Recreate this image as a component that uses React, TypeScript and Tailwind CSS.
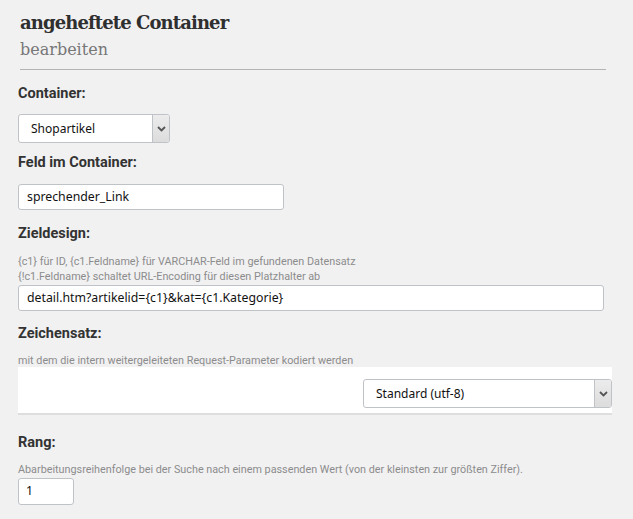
import React from "react";

const label = "text-[14.5px] font-bold text-[#333] font-['Roboto',sans-serif] leading-[15px]";
const help = "text-[10.8px] text-[#8c8c8c] font-['Roboto',sans-serif]";
const field = "bg-white border border-[#bfc3c8] rounded-[3px] font-['Noto_Sans',sans-serif] text-[#111]";

function Chevron() {
  return (
    <svg width="9" height="6" viewBox="0 0 9 6" fill="none">
      <path d="M1 1l3.5 3.5L8 1" stroke="#555" strokeWidth="1.8" />
    </svg>
  );
}

function SelectBox({ value, className }: { value: string; className: string }) {
  return (
    <div className={`${field} text-[12px] flex items-stretch overflow-hidden ${className}`}>
      <div className="flex-1 flex items-center pl-[12px]">{value}</div>
      <div className="w-[17px] flex items-center justify-center bg-gradient-to-b from-[#ececec] to-[#dcdcdc] border-l border-[#bfc3c8]">
        <Chevron />
      </div>
    </div>
  );
}

export default function App() {
  return (
    <div className="min-h-[519px] w-[633px] bg-[#f1f1f2] px-[18px] pt-[11px]">
      <div className="pl-[2px]">
        <h1 className="font-['DejaVu_Serif',serif] font-bold text-[18px] leading-[24px] text-[#2f2f2f] tracking-[-0.9px]">
          angeheftete Container
        </h1>
        <div className="font-['DejaVu_Serif',serif] text-[16px] leading-[20px] text-[#777] mt-[5px]">
          bearbeiten
        </div>
      </div>
      <div className="ml-[2px] mr-[9px] mt-[9px] border-t border-[#b4b4b4]" />

      <div className={`${label} mt-[16px]`}>Container:</div>
      <SelectBox value="Shopartikel" className="w-[152px] h-[29px] mt-[13px]" />

      <div className={`${label} mt-[12px]`}>Feld im Container:</div>
      <div className={`${field} text-[12.3px] w-[266px] h-[26px] mt-[14px] flex items-center px-[8px]`}>
        sprechender_Link
      </div>

      <div className={`${label} mt-[16px]`}>Zieldesign:</div>
      <div className={`${help} leading-[15px] mt-[13px]`}>
        {"{c1} für ID, {c1.Feldname} für VARCHAR-Feld im gefundenen Datensatz"}
        <br />
        {"{!c1.Feldname} schaltet URL-Encoding für diesen Platzhalter ab"}
      </div>
      <div className={`${field} text-[12.3px] w-[586px] h-[26px] mt-[1px] flex items-center px-[8px]`}>
        {"detail.htm?artikelid={c1}&kat={c1.Kategorie}"}
      </div>

      <div className={`${label} mt-[15px]`}>Zeichensatz:</div>
      <div className={`${help} leading-[12px] mt-[14px]`}>
        mit dem die intern weitergeleiteten Request-Parameter kodiert werden
      </div>
      <div className="w-[594px] h-[48px] bg-white border-b-2 border-[#dedede] flex items-start justify-end pt-[12px]">
        <SelectBox value="Standard (utf-8)" className="w-[249px] h-[29px]" />
      </div>

      <div className={`${label} mt-[20px]`}>Rang:</div>
      <div className={`${help} leading-[15px] mt-[12px]`}>
        Abarbeitungsreihenfolge bei der Suche nach einem passenden Wert (von der kleinsten zur größten Ziffer).
      </div>
      <div className={`${field} text-[12.3px] w-[56px] h-[27px] mt-[1px] flex items-center px-[7px]`}>1</div>
    </div>
  );
}
